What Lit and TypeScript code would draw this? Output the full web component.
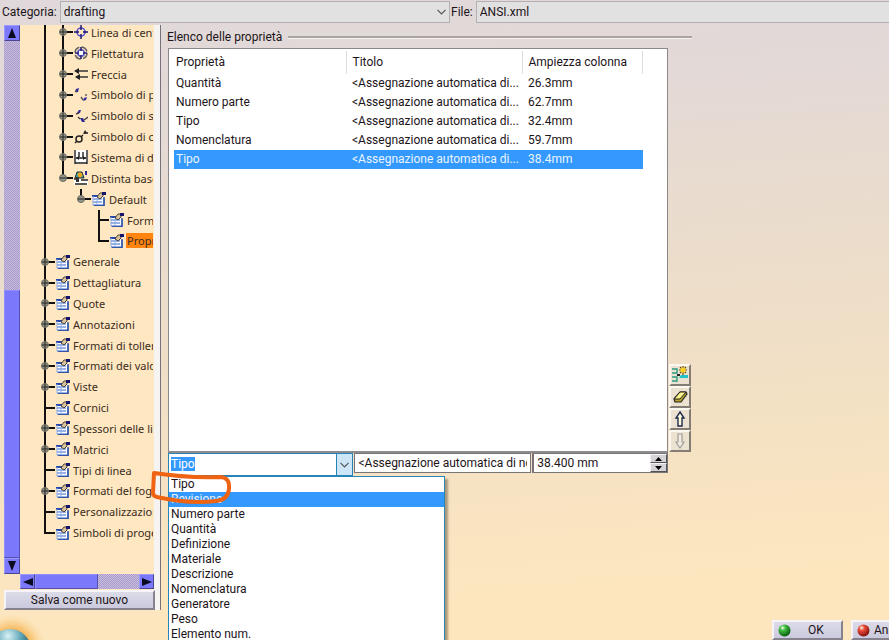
import { LitElement, html, svg, css, nothing } from "lit";
import { customElement, property, query, state } from "lit/decorators.js";
import { classMap } from "lit/directives/class-map.js";

/* rails: one letter for each indent level: "v" passes through, "t" branches, "l" ends here, "." is empty */
interface TreeRow {
  rails: string;
  handle?: "+" | "-";
  icon: string;
  label: string;
  selected?: boolean;
}

const TREE: TreeRow[] = [
  { rails: "vt", handle: "+", icon: "center", label: "Linea di centro" },
  { rails: "vt", handle: "+", icon: "thread", label: "Filettatura" },
  { rails: "vt", handle: "+", icon: "arrow", label: "Freccia" },
  { rails: "vt", handle: "+", icon: "rough", label: "Simbolo di proprietà" },
  { rails: "vt", handle: "+", icon: "weld", label: "Simbolo di saldatura" },
  { rails: "vt", handle: "+", icon: "geo", label: "Simbolo di condizione" },
  { rails: "vt", handle: "+", icon: "dims", label: "Sistema di dimensioni" },
  { rails: "vl", handle: "-", icon: "bom", label: "Distinta base avanzata" },
  { rails: "v.l", handle: "-", icon: "sheet", label: "Default" },
  { rails: "v..t", icon: "sheet", label: "Formato" },
  { rails: "v..l", icon: "sheet", label: "Proprietà", selected: true },
  { rails: "t", handle: "+", icon: "sheet", label: "Generale" },
  { rails: "t", handle: "+", icon: "sheet", label: "Dettagliatura" },
  { rails: "t", handle: "+", icon: "sheet", label: "Quote" },
  { rails: "t", handle: "+", icon: "sheet", label: "Annotazioni" },
  { rails: "t", handle: "+", icon: "sheet", label: "Formati di tolleranza" },
  { rails: "t", handle: "+", icon: "sheet", label: "Formati dei valori" },
  { rails: "t", handle: "+", icon: "sheet", label: "Viste" },
  { rails: "t", icon: "sheet", label: "Cornici" },
  { rails: "t", handle: "+", icon: "sheet", label: "Spessori delle linee" },
  { rails: "t", handle: "+", icon: "sheet", label: "Matrici" },
  { rails: "t", icon: "sheet", label: "Tipi di linea" },
  { rails: "t", handle: "+", icon: "sheet", label: "Formati del foglio" },
  { rails: "t", icon: "sheet", label: "Personalizzazione" },
  { rails: "l", icon: "sheet", label: "Simboli di progetto" },
];

const ICONS: Record<string, unknown> = {
  center: svg`<g fill="none"><circle cx="7" cy="7" r="4" stroke="#5a56d0" stroke-width="1.6"/><path d="M7 0v5M7 9v5M0 7h5M9 7h5" stroke="#15106e" stroke-width="1.4"/></g>`,
  thread: svg`<g fill="none"><circle cx="7" cy="7" r="6" stroke="#66635f" stroke-width="1.6" stroke-dasharray="7 2.4"/><circle cx="7" cy="7" r="3.2" fill="#fff" stroke="#5a56d0" stroke-width="1.6"/><path d="M7 1v4M7 9v4M1 7h4M9 7h4" stroke="#22206e" stroke-width="1.6"/></g>`,
  arrow: svg`<path d="M2 4h12M2 10h12" stroke="#333" stroke-width="1.4"/><path d="M0 4l5-3v6zM1 10l5-3v6z" fill="#222"/>`,
  rough: svg`<path d="M1 4l1-3 3-1-1 4zM9 13l1-3 3-1-1 3z" fill="#2f2a9c"/><path d="M1 3l2 1M7 9l2 3M12 6v2" stroke="#555" stroke-width="1.4"/>`,
  weld: svg`<path d="M3 4l2-3 2 0-1 3zM6 9l3 0 2 4-3 0z" fill="#2f2a9c"/><path d="M2 5l3-1M10 11l4-3M4 8l2 2" stroke="#444" stroke-width="1.4"/>`,
  geo: svg`<circle cx="5" cy="9" r="3" fill="none" stroke="#222" stroke-width="1.5"/><path d="M7 7l2-2M1 13l2-2M10 3h4" fill="none" stroke="#222" stroke-width="1.4"/><path d="M9 4l2-4 2 3z" fill="#222"/>`,
  dims: svg`<path d="M0 0h14v14H0z" fill="#fff"/><path d="M1 0v14M13 0v14M5 2v5M9 2v5M2 8h10M1 13h12" stroke="#222" stroke-width="1.4" fill="none"/><path d="M2 8l3-2v4zM12 8L9 6v4z" fill="#222"/>`,
  bom: svg`<path d="M0 8h14v6H0z" fill="#fff"/><path d="M0 8h4M7 9h7M1 13h12" stroke="#222" stroke-width="1.6"/><path d="M1 7l2-6h5l2 6z" fill="#2ca6b4" stroke="#2b2b2b"/><circle cx="6" cy="4" r="2.4" fill="#f5a51c"/><path d="M12 0v4" stroke="#2f2a9c" stroke-width="2"/><path d="M2 6h3v5H2z" fill="#333"/>`,
  sheet: svg`<path d="M3 6h10v8H3z" fill="#7fa4dc"/><path d="M1 4h10v9H1z" fill="#fff"/><path d="M0 3h6v2H0z" fill="#2546a8"/><path d="M1 7h9M1 10h9M1 13h10" stroke="#3564cc" stroke-width="1.2"/><path d="M1 4v9M5 6v7" stroke="#8fb0e6"/><path d="M12 5v9H2" fill="none" stroke="#27479a" stroke-width="1.3"/><path d="M5 5l3-4h3v3L8 7z" fill="#d9c39a" stroke="#4b4238"/><path d="M10 0h4v3h-4z" fill="#15156b"/>`,
};

const PROPERTIES = [
  { name: "Quantità", width: "26.3mm" },
  { name: "Numero parte", width: "62.7mm" },
  { name: "Tipo", width: "32.4mm" },
  { name: "Nomenclatura", width: "59.7mm" },
  { name: "Tipo", width: "38.4mm" },
];

const OPTIONS = [
  "Tipo", "Revisione", "Numero parte", "Quantità", "Definizione", "Materiale",
  "Descrizione", "Nomenclatura", "Generatore", "Peso", "Elemento num.",
];

@customElement("tree-row")
class TreeRowElement extends LitElement {
  @property({ attribute: false }) row!: TreeRow;

  static styles = css`
    :host { display: flex; align-items: stretch; min-height: 0; min-width: 0; white-space: nowrap; }
    .rail { position: relative; flex: none; width: 18px; }
    .line::before { content: ""; position: absolute; left: 8px; top: 0; bottom: 0; width: 2px; background: #111; }
    .l::before { bottom: 50%; }
    .branch::after { content: ""; position: absolute; left: 8px; right: -1px; top: calc(50% - 1px); height: 2px; background: #111; }
    .handle { position: absolute; z-index: 1; left: 5px; top: calc(50% - 4px); width: 8px; height: 8px; display: block; }
    .icon { flex: none; align-self: center; width: 14px; height: 14px; margin: 0 3px 0 2px; }
    .label { align-self: center; line-height: 15px; min-width: 0; overflow: hidden; }
    .selected { background: #ff8410; margin-left: -1px; padding-left: 1px; }
  `;

  render() {
    const { rails, handle, icon, label, selected } = this.row;
    const last = rails.length - 1;
    return html`
      ${[...rails].map((kind, i) => html`
        <span class=${classMap({ rail: true, line: kind !== ".", l: kind === "l", branch: i === last })}>
          ${i === last && handle
            ? html`<svg class="handle" viewBox="0 0 8 8"><circle cx="4" cy="4" r="3.5" fill="#96968a" stroke="#6a6a60"/><path d=${handle === "+" ? "M1 4h6M4 1v6" : "M1 4h6"} stroke="#22221f"/></svg>`
            : nothing}
        </span>`)}
      <svg class="icon" viewBox="0 0 14 14">${ICONS[icon]}</svg>
      <span class=${classMap({ label: true, selected: !!selected })}>${label}</span>
    `;
  }
}

@customElement("app-root")
class AppRoot extends LitElement {
  @query(".combo-input") comboInput!: HTMLInputElement;
  @state() private selectedRow = 4;
  @state() private activeOption = 1;

  static styles = css`
    :host {
      display: flex; flex-direction: column; box-sizing: border-box;
      height: 100vh; overflow: hidden; position: relative;
      font: 12px/15px Roboto, "Noto Sans", sans-serif; color: #1c1418;
      background: linear-gradient(176deg, #e0d8da 0%, #e3d9d6 18%, #eadccd 38%, #f3e1c4 65%, #fce6bf 88%, #fde6bd 100%);
    }
    * { box-sizing: border-box; }
    button, input, select { font: inherit; color: inherit; border-radius: 0; outline: none; margin: 0; }
    button { padding: 0; }

    .topbar { display: flex; align-items: center; height: 24px; padding-left: 2px; gap: 1px; flex: none; }
    .field { display: flex; align-items: center; gap: 3px; min-width: 0; }
    .category { flex: 448 1 0; }
    .file { flex: 446 1 0; margin-right: -8px; }
    .select-wrap { flex: 1; display: flex; position: relative; min-width: 0; }
    .select { appearance: none; width: 100%; height: 22px; padding: 0 3px; border: 1px solid #b4afb0; background: #e2e1e1; }
    .chevron { position: absolute; right: 4px; top: 8px; width: 9px; height: 6px; pointer-events: none; }

    .body { flex: 1; display: flex; min-height: 0; padding: 1px 0 0 4px; }
    .side { flex: none; width: 157px; display: flex; border-right: 1px solid #77727a; }
    .side-inner { flex: 1; min-width: 0; display: flex; flex-direction: column; border-right: 6px solid #f6f3f3; }
    .side-top { flex: 1; min-height: 0; display: flex; }
    .vbar { flex: none; width: 16px; display: flex; flex-direction: column; }
    .hbar { flex: none; height: 15px; margin-left: 16px; display: flex; }
    .track { background: repeating-conic-gradient(#a79ad0 0 25%, #c9bdd9 0 50%) 0 0 / 2px 2px; }
    .vbar .track { flex: 249; }
    .vbar .thumb { flex: 266; }
    .hbar .thumb { flex: 62; }
    .hbar .track { flex: 41; }
    .thumb { background: #7b78fb; border: 1px solid; border-color: #8f8cff #5550b0 #5550b0 #8f8cff; }
    .sbtn { flex: none; width: 15px; height: 15px; background: #7b78fb; border: 1px solid; border-color: #9d9aff #4a4690 #4a4690 #9d9aff; display: grid; place-items: center; }
    .vbar .sbtn { width: 16px; height: 16px; }
    .sbtn svg { width: 10px; height: 10px; display: block; }
    .tree { flex: 1; min-width: 0; overflow: hidden; background: #ffe7c1; margin: 0; padding: 0 1px 31px 16px; font: 11px/15px "Noto Sans", "Open Sans", sans-serif; display: flex; flex-direction: column; color: #3a2c22; }
    .rows { flex: 1; min-height: 0; margin-top: -3px; display: flex; flex-direction: column; }
    .rows tree-row { flex: 1; }

    .push { border: 2px solid; border-color: #f6f4fa #85828e #85828e #f6f4fa; background: linear-gradient(#dcdbe8, #cbcade); }
    .save { height: 20px; margin: 1px -1px 0 0; line-height: 15px; position: relative; }

    .main { flex: 1; min-width: 0; max-width: 531px; padding: 4px 0 134px 6px; display: flex; flex-direction: column; }
    .legend { display: flex; align-items: center; gap: 6px; height: 17px; line-height: 17px; flex: none; }
    .legend::after { content: ""; flex: 1; height: 2px; background: #aaa3a3; border-bottom: 1px solid #f7f2f0; }
    .list-row { flex: 1; min-height: 0; display: flex; align-items: flex-end; gap: 1px; margin-top: 2px; padding-left: 1px; }
    .list { flex: 1; min-width: 0; align-self: stretch; background: #fff; border: 1px solid #8d8789; border-bottom: 2px solid #8f8c90; padding: 2px 0 0 5px; }
    .grid { table-layout: fixed; width: calc(100% - 24px); border-collapse: collapse; }
    .grid th, .grid td { text-align: left; font-weight: normal; padding: 0 0 0 6px; overflow: hidden; white-space: nowrap; text-overflow: ellipsis; }
    .grid th { height: 23px; border-right: 1px solid #dedede; }
    .grid td { height: 19px; padding-right: 2px; }
    .grid th:first-child, .grid td:first-child { padding-left: 2px; }
    .c1 { width: 172px; }
    .c2 { width: 176px; }
    .picked { background: #3399ff; color: #e9f4ff; }
    .tools { flex: none; width: 22px; margin: 0 1px 1px 0; display: flex; flex-direction: column; }
    .tool { height: 22px; border: 2px solid; border-color: #fbf8f0 #837d76 #837d76 #fbf8f0; background: #ece2d2; display: grid; place-items: center; }
    .tool svg { width: 18px; height: 18px; display: block; }

    .edit-row { flex: none; display: flex; align-items: flex-start; gap: 1px; margin-right: 24px; padding-left: 1px; }
    .combo { position: relative; flex: 188 1 0; min-width: 0; display: flex; height: 23px; border: 1px solid #2684b8; background: #fff; }
    .combo-input { flex: 1; min-width: 0; border: 0; padding: 0 2px; background: none; height: 20px; }
    .combo-input::selection { background: #3399ff; color: #fff; }
    .combo-btn { flex: none; width: 16px; border: 0; border-left: 1px solid #2684b8; background: #cde6f7; display: grid; place-items: center; }
    .combo-btn svg { width: 9px; height: 6px; }
    .text { flex: 173 1 0; min-width: 0; height: 20px; border: 1px solid #77747a; padding: 0 3px; background: #fff; }
    .spin { flex: 136 1 0; min-width: 0; height: 20px; display: flex; border: 1px solid #77747a; border-left-width: 2px; background: #fff; }
    .spin-input { flex: 1; min-width: 0; border: 0; padding: 0 3px; background: none; }
    .spin-btns { flex: none; width: 17px; display: flex; flex-direction: column; }
    .spin-btn { flex: 1; min-height: 0; border: 1px solid; border-color: #f4f2f2 #55525a #55525a #f4f2f2; background: #d5d3d5; display: grid; place-items: center; }
    .spin-btn svg { width: 7px; height: 4px; display: block; }

    .menu { position: absolute; z-index: 2; left: -1px; top: 22px; width: 277px; margin: 0; padding: 0; list-style: none; background: #fff; border: 1px solid #2684b8; box-shadow: 3px 3px 2px rgba(90, 80, 60, .5); }
    .option { height: 15px; line-height: 15px; padding-left: 2px; }
    .mark { position: absolute; z-index: 3; left: -19px; top: 15px; width: 84px; height: 38px; pointer-events: none; }

    .footer { flex: none; height: 30px; display: flex; justify-content: flex-end; align-items: flex-end; gap: 8px; position: relative; }
    .globe { position: absolute; left: 0; bottom: 0; width: 50px; height: 30px; }
    .action { width: 71px; height: 20px; display: flex; align-items: center; padding-left: 4px; }
    .action svg { width: 13px; height: 13px; flex: none; }
    .ok-text { flex: 1; text-align: center; }
    .cancel { margin-right: -33px; gap: 4px; }
  `;

  firstUpdated() {
    this.comboInput.focus({ preventScroll: true });
    this.comboInput.select();
  }

  private arrow(d: string) {
    return html`<svg viewBox="0 0 10 10"><path d=${d} fill="#0a0a20"/></svg>`;
  }

  private chevron(cls: string) {
    return html`<svg class=${cls} viewBox="0 0 9 6"><path d="M0.5 0.8L4.5 4.8L8.5 0.8" fill="none" stroke="#555" stroke-width="1.2"/></svg>`;
  }

  private ball(id: string, light: string, dark: string) {
    return html`<svg viewBox="0 0 13 13"><defs><radialGradient id=${id} cx=".35" cy=".28" r=".75"><stop offset="0" stop-color="#f2fff0"/><stop offset=".3" stop-color=${light}/><stop offset="1" stop-color=${dark}/></radialGradient></defs><circle cx="6.5" cy="6.5" r="6" fill="url(#${id})"/></svg>`;
  }

  render() {
    return html`
      <header class="topbar">
        <div class="field category">
          <label for="category">Categoria:</label>
          <span class="select-wrap">
            <select id="category" class="select"><option>drafting</option></select>
            ${this.chevron("chevron")}
          </span>
        </div>
        <div class="field file">
          <label for="file">File:</label>
          <span class="select-wrap"><select id="file" class="select"><option>ANSI.xml</option></select></span>
        </div>
      </header>

      <div class="body">
        <aside class="side">
          <div class="side-inner">
            <div class="side-top">
              <div class="vbar">
                <button class="sbtn" aria-label="Su">${this.arrow("M5 0L9 10H1z")}</button>
                <div class="track"></div>
                <div class="thumb"></div>
                <button class="sbtn" aria-label="Giù">${this.arrow("M5 10L9 0H1z")}</button>
              </div>
              <nav class="tree"><div class="rows">
                ${TREE.map((row) => html`<tree-row .row=${row}></tree-row>`)}
              </div></nav>
            </div>
            <div class="hbar">
              <button class="sbtn" aria-label="Sinistra">${this.arrow("M0 5L10 1V9z")}</button>
              <div class="thumb"></div>
              <div class="track"></div>
              <button class="sbtn" aria-label="Destra">${this.arrow("M10 5L0 1V9z")}</button>
            </div>
            <button class="push save">Salva come nuovo</button>
          </div>
        </aside>

        <main class="main">
          <div class="legend">Elenco delle proprietà</div>
          <div class="list-row">
            <div class="list">
              <table class="grid">
                <thead><tr><th class="c1">Proprietà</th><th class="c2">Titolo</th><th>Ampiezza colonna</th></tr></thead>
                <tbody>
                  ${PROPERTIES.map((p, i) => html`
                    <tr class=${classMap({ picked: i === this.selectedRow })} @click=${() => (this.selectedRow = i)}>
                      <td>${p.name}</td><td>&lt;Assegnazione automatica di...</td><td>${p.width}</td>
                    </tr>`)}
                </tbody>
              </table>
            </div>
            <div class="tools">
              <button class="tool" aria-label="Aggiungi"><svg viewBox="0 0 18 18"><path d="M1 3h5v4H1M1 11h5v4H1" fill="none" stroke="#2a9a80" stroke-width="1.4"/><path d="M10 9h7v3H8z" fill="#22c3c6"/><path d="M12 0v9M8 4h8M9 1l6 6M15 1L9 7" stroke="#6b4a00" stroke-width="1.2"/><circle cx="12" cy="4" r="2.6" fill="#ffd21f"/><path d="M6 9h3" stroke="#222" stroke-width="2"/></svg></button>
              <button class="tool" aria-label="Cancella"><svg viewBox="0 0 18 18"><path d="M3 11L9 4h6l1 2-6 8H4z" fill="#b7a52c" stroke="#222" stroke-width="1.2"/><path d="M3 11L9 4h6l-6 7z" fill="#fbf58b" stroke="#222"/></svg></button>
              <button class="tool" aria-label="Sposta su"><svg viewBox="0 0 18 18"><path d="M9 2L13 8H11V16H7V8H5z" fill="#fffbd8" stroke="#1c2850" stroke-width="1.4"/></svg></button>
              <button class="tool" aria-label="Sposta giù"><svg viewBox="0 0 18 18"><path d="M9 16L13 10H11V2H7V10H5z" fill="#f1ece4" stroke="#a29d98" stroke-width="1.2"/></svg></button>
            </div>
          </div>
          <div class="edit-row">
            <div class="combo">
              <input class="combo-input" role="combobox" aria-label="Proprietà" aria-expanded="true" aria-controls="options" .value=${"Tipo"} />
              <button class="combo-btn" aria-label="Apri elenco">${this.chevron("")}</button>
              <ul class="menu" id="options" role="listbox">
                ${OPTIONS.map((o, i) => html`
                  <li role="option" aria-selected=${i === this.activeOption}
                    class=${classMap({ option: true, picked: i === this.activeOption })}
                    @mouseenter=${() => (this.activeOption = i)}>${o}</li>`)}
              </ul>
              <svg class="mark" viewBox="0 0 84 38"><path d="M4 4L3 24Q3 27 7 28Q38 35 66 32Q78 31 79 20Q80 8 70 8Q36 9 4 4z" fill="none" stroke="#ee6413" stroke-width="4" stroke-linejoin="round"/></svg>
            </div>
            <input class="text" aria-label="Titolo" .value=${"<Assegnazione automatica di nome>"} />
            <div class="spin">
              <input class="spin-input" aria-label="Ampiezza colonna" .value=${"38.400 mm"} />
              <span class="spin-btns">
                <button class="spin-btn" aria-label="Aumenta"><svg viewBox="0 0 7 4"><path d="M3.5 0L7 4H0z"/></svg></button>
                <button class="spin-btn" aria-label="Diminuisci"><svg viewBox="0 0 7 4"><path d="M3.5 4L7 0H0z"/></svg></button>
              </span>
            </div>
          </div>
        </main>
      </div>

      <footer class="footer">
        <svg class="globe" viewBox="0 0 50 30">
          <defs>
            <radialGradient id="glow" gradientUnits="userSpaceOnUse" cx="12" cy="38" r="34"><stop offset=".5" stop-color="#f6b04e"/><stop offset="1" stop-color="#fbd58c" stop-opacity="0"/></radialGradient>
            <radialGradient id="sea" gradientUnits="userSpaceOnUse" cx="8" cy="26" r="26"><stop offset="0" stop-color="#d8f2f4"/><stop offset=".5" stop-color="#5fa6b8"/><stop offset="1" stop-color="#23505f"/></radialGradient>
          </defs>
          <circle cx="12" cy="38" r="34" fill="url(#glow)"/>
          <circle cx="10" cy="40" r="21" fill="url(#sea)"/>
        </svg>
        <button class="push action">${this.ball("ok", "#43c043", "#06570c")}<span class="ok-text">OK</span></button>
        <button class="push action cancel">${this.ball("no", "#f0503c", "#7c0d0a")}<span>Annulla</span></button>
      </footer>
    `;
  }
}
